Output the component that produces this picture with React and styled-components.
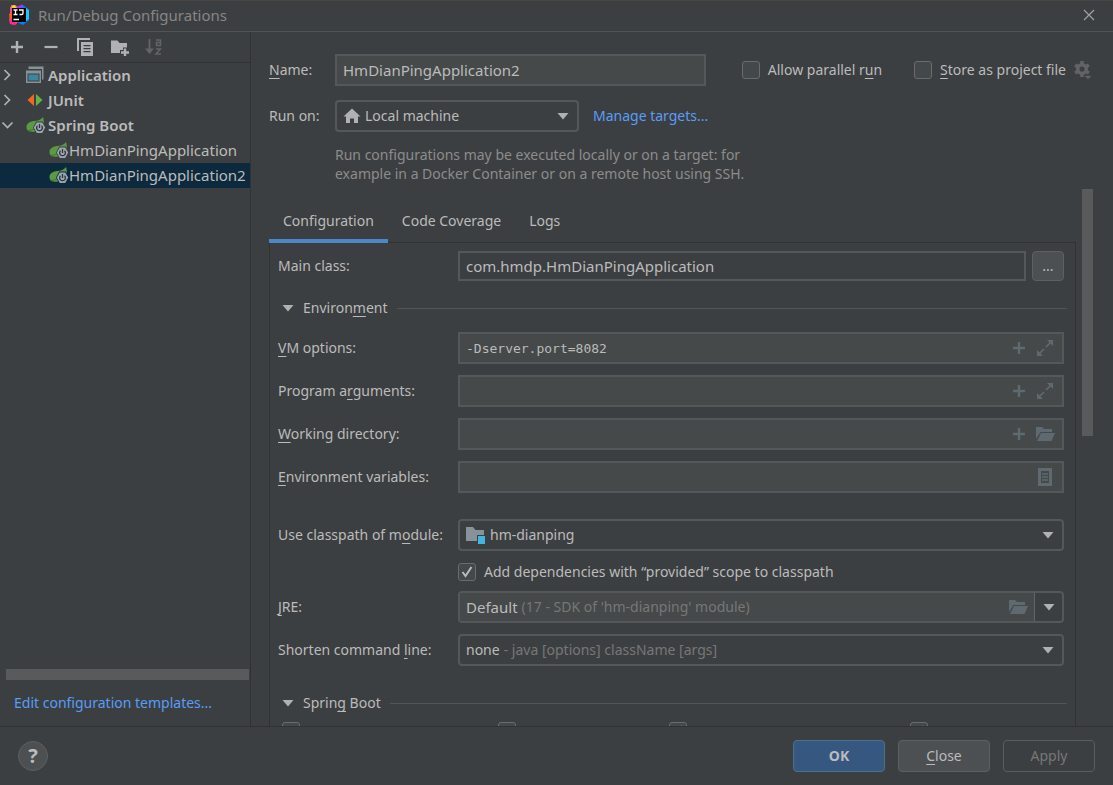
import React from "react";
import styled, { createGlobalStyle, css } from "styled-components";

const c = {
  bg: "#3c3f41",
  field: "#45494a",
  line: "#323232",
  border: "#646464",
  text: "#bbbbbb",
  dim: "#8c8c8c",
  faint: "#777777",
  link: "#589df6",
  icon: "#afb1b3",
  fieldIcon: "#5f6a70",
  selected: "#0d293e",
};

const GlobalStyle = createGlobalStyle`
  * { box-sizing: border-box; }
  body {
    margin: 0;
    background: ${c.bg};
    color: ${c.text};
    font: 14px/20px "Noto Sans", "Open Sans", sans-serif;
  }
  button, input, select { font: inherit; color: inherit; margin: 0; }
  svg { display: block; flex: none; }
`;

const Dialog = styled.div`
  display: flex;
  flex-direction: column;
  height: 100vh;
  overflow: hidden;
  border-top: 1px solid #4a4642;
`;

const TitleBar = styled.header`
  display: flex;
  align-items: center;
  gap: 8px;
  height: 31px;
  flex: none;
  padding: 0 18px 2px 8px;
  border-bottom: 1px solid #515355;
  color: #868686;
`;

const Title = styled.h1`
  flex: 1;
  margin: 0;
  font-size: 15px;
  font-weight: 400;
`;

const IconButton = styled.button`
  display: grid;
  place-items: center;
  padding: 0;
  border: 0;
  background: none;
`;

const Body = styled.div`
  display: flex;
  flex: 1;
  min-height: 0;
`;

const Sidebar = styled.aside`
  display: flex;
  flex-direction: column;
  width: 251px;
  flex: none;
  border-right: 1px solid ${c.line};
`;

const Toolbar = styled.div`
  display: flex;
  align-items: center;
  gap: 16px;
  height: 31px;
  padding-left: 8px;
  border-bottom: 1px solid ${c.line};
`;

const Tree = styled.ul`
  flex: 1;
  margin: 0;
  padding: 0;
  list-style: none;
  font-size: 15px;
`;

const TreeRow = styled.li`
  display: flex;
  align-items: center;
  height: 25px;
  padding-left: ${(p) => (p.$child ? "49px" : "0")};
  padding-bottom: 1px;
  font-weight: ${(p) => (p.$child ? 400 : 600)};
  background: ${(p) => (p.$selected ? c.selected : "transparent")};
`;

const Chevron = styled.span`
  width: 26px;
  padding-left: 1px;
`;

const NodeIcon = styled.span`
  width: ${(p) => (p.$child ? "20px" : "22px")};
`;

const HScroll = styled.div`
  height: 11px;
  margin: 0 1px 0 6px;
  background: #595a5c;
`;

const Link = styled.a`
  color: ${c.link};
  text-decoration: none;
`;

const TemplatesLink = styled(Link)`
  padding: 13px 14px;
`;

const Main = styled.main`
  display: flex;
  flex: 1;
  flex-direction: column;
  min-width: 0;
  padding: 22px 20px 0 18px;
`;

const TopRow = styled.div`
  display: flex;
  align-items: center;
  height: 32px;
`;

const TopLabel = styled.label`
  width: 66px;
  flex: none;
`;

const fieldFrame = css`
  display: flex;
  align-items: center;
  min-width: 0;
  height: ${(p) => (p.$plain ? "30px" : "32px")};
  border: 2px solid #55585a;
`;

const Field = styled.div`
  ${fieldFrame}
  flex: 1;
  gap: 8px;
  padding: 0 8px 0 6px;
  background: ${(p) => (p.$plain ? c.bg : c.field)};
`;

const Combo = styled.div`
  ${fieldFrame}
  flex: ${(p) => (p.$width ? "none" : "1")};
  width: ${(p) => p.$width || "auto"};
  padding: 0 8px 0 6px;
  gap: 4px;
  border-radius: 4px;
`;

const TextInput = styled.input`
  flex: 1;
  min-width: 0;
  height: 26px;
  padding: 0;
  border: 0;
  outline: 0;
  background: none;
  font-size: 15px;
  ${(p) => p.$mono && css`font-family: "DejaVu Sans Mono", monospace; font-size: 13px;`}
  ${(p) => p.$fit && css`flex: none; field-sizing: content;`}
`;

const Select = styled.select`
  flex: ${(p) => (p.$fit ? "none" : "1")};
  min-width: 0;
  height: 28px;
  padding: 0;
  border: 0;
  outline: 0;
  appearance: none;
  background: ${c.bg};
  field-sizing: content;
`;

const Hint = styled.span`
  flex: 1;
  color: ${c.faint};
  white-space: nowrap;
`;

const SplitCombo = styled.div`
  ${fieldFrame}
  flex: 1;
  border-radius: 4px;
`;

const SplitText = styled.div`
  display: flex;
  flex: 1;
  align-items: center;
  gap: 4px;
  height: 28px;
  padding: 0 7px 0 6px;
  background: ${c.field};
`;

const SplitButton = styled(IconButton)`
  width: 28px;
  height: 28px;
  border-left: 1px solid ${c.border};
`;

const CheckLabel = styled.label`
  display: flex;
  align-items: center;
  gap: 8px;
  white-space: nowrap;
`;

const Checkbox = styled.input.attrs({ type: "checkbox" })`
  appearance: none;
  width: 18px;
  height: 18px;
  flex: none;
  border: 1px solid #6b6b6b;
  border-radius: 3px;
  background: #43494a;
  &:checked {
    background: #43494a
      url("data:image/svg+xml,%3Csvg xmlns='http://www.w3.org/2000/svg' viewBox='0 0 16 16'%3E%3Cpath d='M3.5 8l3 4 6-9' fill='none' stroke='%23bbbbbb' stroke-width='2'/%3E%3C/svg%3E");
  }
`;

const TopChecks = styled.div`
  display: flex;
  align-items: center;
  gap: 32px;
  margin-left: 36px;
`;

const StoreGroup = styled.div`
  display: flex;
  align-items: center;
  gap: 8px;
`;

const RunRow = styled(TopRow)`
  margin-top: 14px;
`;

const ManageLink = styled(Link)`
  margin-left: 14px;
`;

const Note = styled.p`
  width: 440px;
  margin: 13px 0 0 66px;
  color: ${c.dim};
  font-size: 14px;
  line-height: 19px;
`;

const Scroller = styled.div`
  display: flex;
  flex: 1;
  min-height: 0;
  margin-top: 6px;
`;

const TabArea = styled.div`
  flex: 1;
  display: flex;
  flex-direction: column;
  min-width: 0;
  padding-top: 12px;
`;

const VScroll = styled.div`
  width: 11px;
  height: 247px;
  margin-left: 6px;
  background: #595a5c;
`;

const Tabs = styled.div`
  display: flex;
  flex: none;
  height: 42px;
  box-shadow: inset 0 -1px ${c.line};
`;

const Tab = styled.button`
  padding: 2px 14px 0;
  border: 0;
  border-bottom: 4px solid ${(p) => (p.$active ? "#4a88c7" : "transparent")};
  background: none;
`;

const Panel = styled.section`
  display: flex;
  flex: 1;
  flex-direction: column;
  min-height: 0;
  overflow: hidden;
  padding: 8px 8px 0;
  border: solid ${c.line};
  border-width: 0 1px;
`;

const FormRow = styled.div`
  display: flex;
  align-items: center;
  flex: none;
  margin: 0 3px ${(p) => p.$after || "11px"} 0;
`;

const FormLabel = styled.label`
  width: 180px;
  flex: none;
  white-space: nowrap;
`;

const BrowseButton = styled.button`
  width: 32px;
  height: 30px;
  margin-left: 6px;
  padding: 0;
  border: 1px solid #5e6060;
  border-radius: 4px;
  background: #4c5052;
`;

const Section = styled.h2`
  display: flex;
  align-items: center;
  flex: none;
  height: 20px;
  margin: 0 0 ${(p) => p.$after};
  padding-left: 4px;
  gap: 9px;
  font-size: 14px;
  font-weight: 400;
  &::after {
    content: "";
    flex: 1;
    height: 1px;
    background: #555555;
  }
`;

const CheckRow = styled.div`
  display: grid;
  grid-template-columns: 216px 171px 241px 1fr;
  flex: none;
  padding-left: 4px;
`;

const Footer = styled.footer`
  display: flex;
  align-items: center;
  flex: none;
  gap: 13px;
  height: 59px;
  padding: 0 18px;
  border-top: 1px solid ${c.line};
`;

const HelpButton = styled.button`
  width: 30px;
  height: 30px;
  margin-right: auto;
  padding: 0;
  border: 1px solid #5e6060;
  border-radius: 50%;
  background: #4c5052;
  font-size: 20px;
  font-weight: 700;
`;

const tones = {
  primary: css`background: #365880; border-color: #4c708c; font-weight: 700;`,
  normal: css`background: #4c5052; border-color: #5e6060;`,
  disabled: css`background: none; border-color: #5a5c5e; color: ${c.faint};`,
};

const Button = styled.button`
  width: 92px;
  height: 32px;
  padding: 0;
  border: 1px solid;
  border-radius: 4px;
  ${(p) => tones[p.$tone]}
`;

const Key = styled.u`
  text-underline-offset: 3px;
  text-decoration-skip-ink: none;
`;

const Logo = () => (
  <svg width="22" height="22" viewBox="0 0 22 22">
    <path d="M2 3l5-2 5 3-3 9-7 1z" fill="#fc4a8c" />
    <path d="M3 1.500l4-.5 2 4-4 2z" fill="#f9d423" />
    <path d="M1 10l5-2 5 9-4 4-5-2z" fill="#fc601d" />
    <path d="M1 15l4 0 4 4-3 2-4-1z" fill="#fe2898" />
    <path d="M9 3l5-2.500 4 3-1 5-8-1z" fill="#9b3df5" />
    <path d="M14 1l6 4 1 11-6 5-6-3 7-8z" fill="#087cfa" />
    <path d="M18 4l3 2v9l-3 2z" fill="#20c4fb" />
    <rect x="4" y="4" width="14" height="14" fill="#000" />
    <path d="M5.500 6h4M7.500 6v4.500M5.500 10.500h4M11 6h4v3.200q0 1.300-1.300 1.300H11.500M5.500 15.500h5.500" fill="none" stroke="#fff" strokeWidth="1.300" />
  </svg>
);

const Plus = ({ color = c.icon }) => (
  <svg width="18" height="18" viewBox="0 0 18 18">
    <path d="M9 3v12M3 9h12" stroke={color} strokeWidth="2.400" />
  </svg>
);

const Minus = () => (
  <svg width="18" height="18" viewBox="0 0 18 18">
    <path d="M2.500 9h13" stroke={c.icon} strokeWidth="2.200" />
  </svg>
);

const Copy = () => (
  <svg width="18" height="18" viewBox="0 0 18 18">
    <path d="M1 0h13v2H3v11H1z" fill={c.icon} />
    <path d="M5 4h12v14H5zM7.500 7v1.300h7V7zm0 3v1.300h7V10zm0 3v1.300h7V13z" fill={c.icon} fillRule="evenodd" />
  </svg>
);

const FolderAdd = () => (
  <svg width="19" height="18" viewBox="0 0 19 18">
    <path d="M1 2.500h6.500l2 2.500H17v4.500h-4v2.500h-3v3H1z" fill={c.icon} />
    <path d="M15 10.500v8M11 14.500h8" stroke={c.icon} strokeWidth="2.400" />
  </svg>
);

const SortAz = () => (
  <svg width="18" height="18" viewBox="0 0 18 18" fill="none" stroke="#626466" strokeWidth="1.800">
    <path d="M4.500 1v12" />
    <path d="M0 10.500h9L4.500 16z" fill="#626466" stroke="none" />
    <path d="M11 2h4.500v5.500h-4V4.500h4M11 11h4.500l-4.500 5h5" strokeWidth="1.500" />
  </svg>
);

const ChevronIcon = ({ open }) => (
  <svg width="14" height="14" viewBox="0 0 14 14">
    <path d={open ? "M1.500 4.500l5 5 5-5" : "M3.500 2l5 5-5 5"} fill="none" stroke={c.icon} strokeWidth="1.700" />
  </svg>
);

const AppIcon = () => (
  <svg width="18" height="18" viewBox="0 0 18 18">
    <path d="M2.500 .5H17.500V13.500H16V3H2.500z" fill="#87939a" />
    <path d="M0 4.500h15V17H0zM1.500 7.500v8h12v-8z" fill="#87939a" fillRule="evenodd" />
    <path d="M2.500 8.500h10v6h-10z" fill="#3e86a0" />
  </svg>
);

const JUnitIcon = () => (
  <svg width="18" height="18" viewBox="0 0 18 18">
    <path d="M8 3v12L1.500 9z" fill="#f26522" />
    <path d="M10 3v12L16.500 9z" fill="#62b543" />
  </svg>
);

const SpringIcon = ({ back = c.bg }) => (
  <svg width="20" height="20" viewBox="0 0 20 20">
    <path d="M17 2c1.500 5 1 9-2 12-3 2.500-7 3-10 2.500C2 17 .5 14.500.5 12 .5 8.500 3.500 6.500 8 6c4-.4 7-1 9-4z" fill="#5a9a44" />
    <path d="M2 15.500c5-.5 9-2.500 12-6.500" fill="none" stroke="#3f7434" />
    <path d="M10.200 6.500h6.600l3.200 6-3.200 6h-6.600l-3.200-6z" fill={back} />
    <path d="M10.800 7.500h5.400l3 5-3 5.500h-5.400l-3-5.500z" fill="#9aa7b0" />
    <path d="M11.500 10.700a2.900 2.900 0 1 0 4 0M13.500 9v4" fill="none" stroke="#2e363b" strokeWidth="1.300" />
  </svg>
);

const HomeIcon = () => (
  <svg width="18" height="18" viewBox="0 0 18 18">
    <path d="M9 1.500l8.500 8H15V16h-4v-4.500H7V16H3V9.500H.500z" fill={c.icon} />
  </svg>
);

const Triangle = () => (
  <svg width="12" height="8" viewBox="0 0 12 8">
    <path d="M.500 1h11L6 7.500z" fill={c.icon} />
  </svg>
);

const Expand = () => (
  <svg width="18" height="18" viewBox="0 0 18 18" fill={c.fieldIcon}>
    <path d="M11 1h6v6zM1 11v6h6z" />
    <path d="M15 3l-5 5M3 15l5-5" stroke={c.fieldIcon} strokeWidth="1.600" />
  </svg>
);

const FolderOpen = () => (
  <svg width="18" height="18" viewBox="0 0 18 18" fill={c.fieldIcon} overflow="visible">
    <path d="M0 2h6l2 2h8v3H4.500L0 14z" />
    <path d="M5 8h14L15.500 16H1z" />
  </svg>
);

const ListIcon = () => (
  <svg width="18" height="18" viewBox="0 0 18 18">
    <path d="M2 0h14v18H2zM5 3v12h8V3z" fill={c.fieldIcon} fillRule="evenodd" />
    <path d="M6 6h6M6 9h6M6 12h6" stroke={c.fieldIcon} strokeWidth="1.400" />
  </svg>
);

const ModuleIcon = () => (
  <svg width="20" height="20" viewBox="0 0 20 20">
    <path d="M0 2h7l2.500 3H18v5h-7v6H0z" fill="#87939a" />
    <path d="M12 11h7v8h-7z" fill="#40b6e0" />
  </svg>
);

const Gear = () => (
  <svg width="19" height="20" viewBox="0 0 19 20">
    <g stroke="#616365" fill="none">
      <circle cx="8" cy="9" r="4.300" strokeWidth="3.500" />
      <path d="M8 1v3M8 14v3M1.100 5l2.600 1.500M12.300 11.500l2.600 1.500M1.100 13l2.600-1.500M12.300 6.500L14.900 5" strokeWidth="3.600" />
    </g>
    <path d="M10 15.500h8l-4 4z" fill="#616365" stroke={c.bg} strokeWidth=".6" />
  </svg>
);

const Cross = () => (
  <svg width="12" height="12" viewBox="0 0 12 12">
    <path d="M1 1l10 10M11 1L1 11" stroke="#a0a0a0" strokeWidth="1.200" />
  </svg>
);

export default function App() {
  return (
    <>
      <GlobalStyle />
      <Dialog>
        <TitleBar>
          <Logo />
          <Title>Run/Debug Configurations</Title>
          <IconButton aria-label="Close window"><Cross /></IconButton>
        </TitleBar>
        <Body>
          <Sidebar>
            <Toolbar>
              <IconButton aria-label="Add"><Plus /></IconButton>
              <IconButton aria-label="Remove"><Minus /></IconButton>
              <IconButton aria-label="Copy"><Copy /></IconButton>
              <IconButton aria-label="New folder"><FolderAdd /></IconButton>
              <IconButton aria-label="Sort" disabled><SortAz /></IconButton>
            </Toolbar>
            <Tree>
              <TreeRow><Chevron><ChevronIcon /></Chevron><NodeIcon><AppIcon /></NodeIcon>Application</TreeRow>
              <TreeRow><Chevron><ChevronIcon /></Chevron><NodeIcon><JUnitIcon /></NodeIcon>JUnit</TreeRow>
              <TreeRow><Chevron><ChevronIcon open /></Chevron><NodeIcon><SpringIcon /></NodeIcon>Spring Boot</TreeRow>
              <TreeRow $child><NodeIcon $child><SpringIcon /></NodeIcon>HmDianPingApplication</TreeRow>
              <TreeRow $child $selected><NodeIcon $child><SpringIcon back={c.selected} /></NodeIcon>HmDianPingApplication2</TreeRow>
            </Tree>
            <HScroll />
            <TemplatesLink href="#templates">Edit configuration templates...</TemplatesLink>
          </Sidebar>
          <Main>
            <TopRow>
              <TopLabel htmlFor="name"><Key>N</Key>ame:</TopLabel>
              <Field><TextInput id="name" defaultValue="HmDianPingApplication2" /></Field>
              <TopChecks>
                <CheckLabel><Checkbox /><span>Allow parallel r<Key>u</Key>n</span></CheckLabel>
                <StoreGroup>
                  <CheckLabel><Checkbox /><span><Key>S</Key>tore as project file</span></CheckLabel>
                  <IconButton aria-label="Storage options"><Gear /></IconButton>
                </StoreGroup>
              </TopChecks>
            </TopRow>
            <RunRow>
              <TopLabel htmlFor="target">Run on:</TopLabel>
              <Combo $width="244px">
                <HomeIcon />
                <Select id="target"><option>Local machine</option></Select>
                <Triangle />
              </Combo>
              <ManageLink href="#targets">Manage targets...</ManageLink>
            </RunRow>
            <Note>
              Run configurations may be executed locally or on a target: for
              <br />
              example in a Docker Container or on a remote host using SSH.
            </Note>
            <Scroller>
              <TabArea>
                <Tabs role="tablist">
                  <Tab role="tab" aria-selected="true" $active>Configuration</Tab>
                  <Tab role="tab">Code Coverage</Tab>
                  <Tab role="tab">Logs</Tab>
                </Tabs>
                <Panel>
                  <FormRow $after="17px">
                    <FormLabel htmlFor="main">Main class:</FormLabel>
                    <Field $plain><TextInput id="main" defaultValue="com.hmdp.HmDianPingApplication" /></Field>
                    <BrowseButton aria-label="Browse class">...</BrowseButton>
                  </FormRow>
                  <Section $after="14px"><Triangle /><span>Environ<Key>m</Key>ent</span></Section>
                  <FormRow>
                    <FormLabel htmlFor="vm"><Key>V</Key>M options:</FormLabel>
                    <Field>
                      <TextInput id="vm" $mono defaultValue="-Dserver.port=8082" />
                      <Plus color={c.fieldIcon} /><Expand />
                    </Field>
                  </FormRow>
                  <FormRow>
                    <FormLabel htmlFor="args">Program a<Key>r</Key>guments:</FormLabel>
                    <Field><TextInput id="args" $mono /><Plus color={c.fieldIcon} /><Expand /></Field>
                  </FormRow>
                  <FormRow>
                    <FormLabel htmlFor="dir"><Key>W</Key>orking directory:</FormLabel>
                    <Field><TextInput id="dir" /><Plus color={c.fieldIcon} /><FolderOpen /></Field>
                  </FormRow>
                  <FormRow $after="26px">
                    <FormLabel htmlFor="env"><Key>E</Key>nvironment variables:</FormLabel>
                    <Field><TextInput id="env" /><ListIcon /></Field>
                  </FormRow>
                  <FormRow>
                    <FormLabel htmlFor="module">Use classpath of m<Key>o</Key>dule:</FormLabel>
                    <Combo>
                      <ModuleIcon />
                      <Select id="module"><option>hm-dianping</option></Select>
                      <Triangle />
                    </Combo>
                  </FormRow>
                  <FormRow $after="9px">
                    <FormLabel as="span" />
                    <CheckLabel><Checkbox defaultChecked />Add dependencies with “provided” scope to classpath</CheckLabel>
                  </FormRow>
                  <FormRow>
                    <FormLabel htmlFor="jre"><Key>J</Key>RE:</FormLabel>
                    <SplitCombo>
                      <SplitText>
                        <TextInput id="jre" $fit defaultValue="Default" />
                        <Hint>(17 - SDK of 'hm-dianping' module)</Hint>
                        <FolderOpen />
                      </SplitText>
                      <SplitButton aria-label="Choose JRE"><Triangle /></SplitButton>
                    </SplitCombo>
                  </FormRow>
                  <FormRow $after="27px">
                    <FormLabel htmlFor="shorten">Shorten command <Key>l</Key>ine:</FormLabel>
                    <Combo>
                      <Select id="shorten" $fit><option>none</option></Select>
                      <Hint>- java [options] className [args]</Hint>
                      <Triangle />
                    </Combo>
                  </FormRow>
                  <Section $after="9px"><Triangle /><span>Sprin<Key>g</Key> Boot</span></Section>
                  <CheckRow>
                    <Checkbox aria-label="Enable debug output" />
                    <Checkbox aria-label="Hide banner" />
                    <Checkbox aria-label="Enable launch optimization" defaultChecked />
                    <Checkbox aria-label="Enable JMX agent" defaultChecked />
                  </CheckRow>
                </Panel>
              </TabArea>
              <VScroll />
            </Scroller>
          </Main>
        </Body>
        <Footer>
          <HelpButton aria-label="Help">?</HelpButton>
          <Button $tone="primary">OK</Button>
          <Button $tone="normal"><Key>C</Key>lose</Button>
          <Button $tone="disabled" disabled>Apply</Button>
        </Footer>
      </Dialog>
    </>
  );
}
